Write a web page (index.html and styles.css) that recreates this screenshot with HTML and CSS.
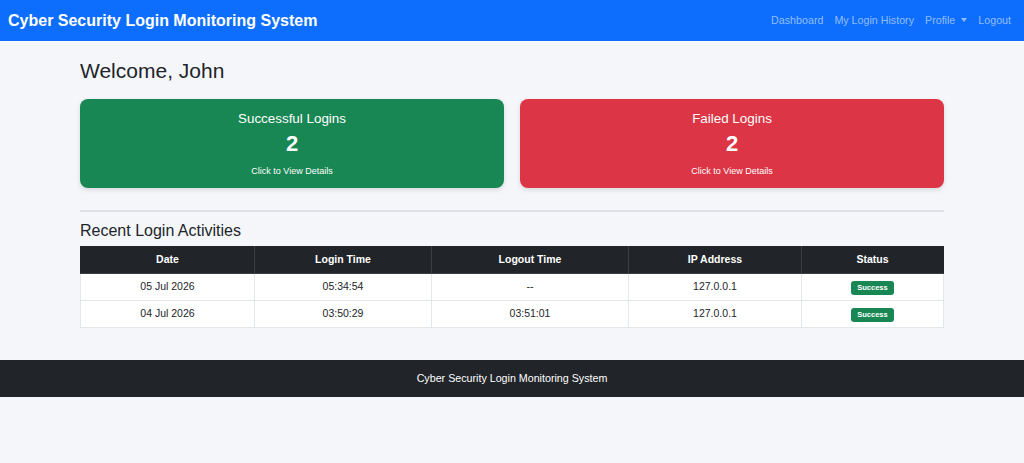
FILE: index.html
```html
<!DOCTYPE html>
<html lang="en">
<head>
    <meta charset="UTF-8">
    <meta name="viewport" content="width=device-width, initial-scale=1.0">
    <title>Dashboard | Cyber Security Login Monitoring System</title>
    <link rel="stylesheet" href="styles.css">
</head>
<body>
    <nav class="navbar">
        <a class="brand" href="#">Cyber Security Login Monitoring System</a>
        <ul class="nav-links">
            <li><a href="#">Dashboard</a></li>
            <li><a href="#">My Login History</a></li>
            <li><a href="#" class="dropdown">Profile</a></li>
            <li><a href="#">Logout</a></li>
        </ul>
    </nav>

    <main class="container">
        <h2 class="welcome">Welcome, John</h2>

        <div class="stats">
            <a href="#" class="stat-card stat-success">
                <h5>Successful Logins</h5>
                <div class="stat-count">2</div>
                <p>Click to View Details</p>
            </a>
            <a href="#" class="stat-card stat-failed">
                <h5>Failed Logins</h5>
                <div class="stat-count">2</div>
                <p>Click to View Details</p>
            </a>
        </div>

        <hr class="divider">

        <h4 class="section-title">Recent Login Activities</h4>

        <table class="activity-table">
            <thead>
                <tr>
                    <th class="col-date">Date</th>
                    <th class="col-login">Login Time</th>
                    <th class="col-logout">Logout Time</th>
                    <th class="col-ip">IP Address</th>
                    <th>Status</th>
                </tr>
            </thead>
            <tbody>
                <tr>
                    <td>05 Jul 2026</td>
                    <td>05:34:54</td>
                    <td>--</td>
                    <td>127.0.0.1</td>
                    <td><span class="badge">Success</span></td>
                </tr>
                <tr>
                    <td>04 Jul 2026</td>
                    <td>03:50:29</td>
                    <td>03:51:01</td>
                    <td>127.0.0.1</td>
                    <td><span class="badge">Success</span></td>
                </tr>
            </tbody>
        </table>
    </main>

    <footer class="footer">
        Cyber Security Login Monitoring System
    </footer>
</body>
</html>
```

FILE: styles.css
```css
* {
    margin: 0;
    padding: 0;
    box-sizing: border-box;
}

body {
    font-family: 'Liberation Sans', Arial, sans-serif;
    color: #212529;
    background: #f4f6f9;
    line-height: 1.5;
}

a {
    text-decoration: none;
    color: inherit;
}

/* Navbar */
.navbar {
    height: 41px;
    background: #0d6efd;
    display: flex;
    align-items: center;
    justify-content: space-between;
    padding: 0 13px 0 8px;
}

.brand {
    color: #fff;
    font-size: 16px;
    font-weight: 700;
}

.nav-links {
    list-style: none;
    display: flex;
    gap: 11px;
    margin-top: -3px;
}

.nav-links a {
    color: rgba(255, 255, 255, 0.55);
    font-size: 10.7px;
}

.dropdown::after {
    content: '';
    display: inline-block;
    margin-left: 6px;
    vertical-align: 2px;
    border-top: 4px solid;
    border-left: 3.5px solid transparent;
    border-right: 3.5px solid transparent;
}

/* Main */
.container {
    max-width: 864px;
    margin: 0 auto;
    padding-top: 17px;
}

.welcome {
    font-size: 21px;
    font-weight: 400;
    line-height: 1;
    margin-top: 2px;
    margin-bottom: 18px;
}

.stats {
    display: grid;
    grid-template-columns: 1fr 1fr;
    gap: 16px;
}

.stat-card {
    height: 89px;
    border-radius: 8px;
    color: #fff;
    text-align: center;
    padding-top: 10px;
    box-shadow: 0 2px 5px rgba(0, 0, 0, 0.12);
}

.stat-success { background: #198754; }
.stat-failed { background: #dc3545; }

.stat-card h5 {
    font-size: 13.4px;
    font-weight: 400;
    line-height: 20px;
}

.stat-count {
    font-size: 22px;
    font-weight: 700;
    line-height: 30px;
    margin-bottom: 6px;
}

.stat-card p {
    font-size: 9px;
    line-height: 12px;
}

.divider {
    border: 0;
    border-top: 2px solid #dde0e4;
    margin: 22px 0 6px;
}

.section-title {
    font-size: 16px;
    font-weight: 400;
    line-height: 26px;
    margin-bottom: 2px;
}

/* Table */
.activity-table {
    width: 100%;
    border-collapse: collapse;
    background: #fff;
    font-size: 10.5px;
    text-align: center;
}

.activity-table th,
.activity-table td {
    height: 27px;
    border: 1px solid #e3e6ea;
    vertical-align: middle;
}

.activity-table th {
    background: #212529;
    color: #fff;
    font-weight: 700;
    border-color: #3a3f44;
    border-top-color: #212529;
}

.activity-table th:first-child { border-left-color: #212529; }
.activity-table th:last-child { border-right-color: #212529; }

.col-date { width: 174px; }
.col-login { width: 177px; }
.col-logout { width: 197px; }
.col-ip { width: 173px; }

.badge {
    display: inline-block;
    background: #198754;
    color: #fff;
    font-size: 7.5px;
    font-weight: 700;
    line-height: 14px;
    padding: 0 6px;
    border-radius: 3px;
}

/* Footer */
.footer {
    margin-top: 32px;
    height: 37px;
    background: #212529;
    color: #fff;
    font-size: 10.7px;
    display: flex;
    align-items: center;
    justify-content: center;
}
```
